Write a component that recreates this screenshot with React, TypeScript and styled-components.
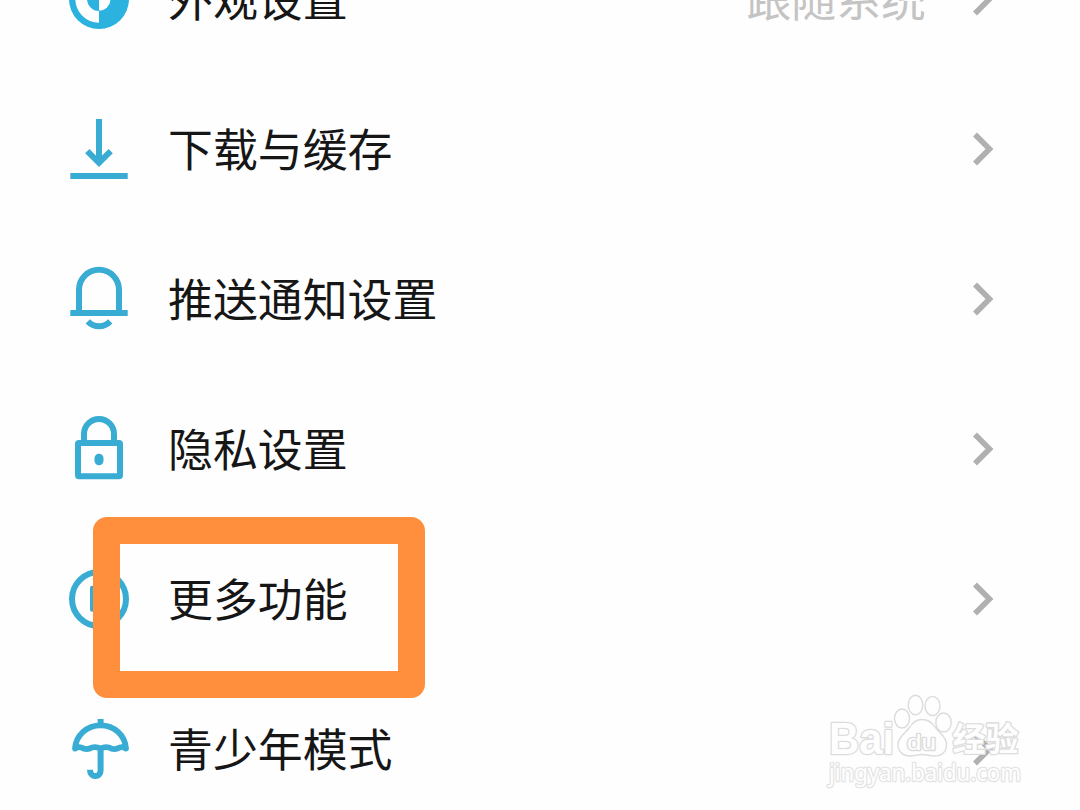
import React from 'react';
import styled, { createGlobalStyle } from 'styled-components';

const GlobalStyle = createGlobalStyle`
  * {
    box-sizing: border-box;
  }
  body {
    margin: 0;
    background-color: #fefefe;
    font-family: 'Liberation Sans', 'Noto Sans CJK SC', sans-serif;
  }
`;

const Screen = styled.main`
  position: relative;
  width: 1080px;
  height: 810px;
  overflow: hidden;
  background-color: #fefefe;
`;

/* the list is scrolled half way into its first row */
const SettingList = styled.ul`
  list-style: none;
  margin: -76px 0 0;
  padding: 0;
`;

const SettingRow = styled.li`
  display: flex;
  align-items: center;
  height: 150px;
  padding: 0 80px 0 60px;
`;

const RowIcon = styled.svg<{ $color?: string }>`
  flex: none;
  width: 80px;
  height: 80px;
  margin-right: 28px;
  color: ${({ $color }) => $color || '#38acd2'};
  fill: none;
  stroke: currentColor;
  stroke-width: 6;
`;

const Label = styled.span`
  flex: 1;
  padding-bottom: 3px;
  color: #161616;
  font-family: 'Noto Sans CJK SC', sans-serif;
  font-size: 44.9px;
  line-height: 64px;
  white-space: nowrap;
`;

const Value = styled(Label)`
  flex: none;
  margin-right: 41px;
  color: #c4c4c4;
`;

const Arrow = styled.svg`
  flex: none;
  width: 33px;
  height: 40px;
  fill: none;
  stroke: #b0b0b0;
  stroke-width: 5.6;
`;

const Highlight = styled.div`
  position: absolute;
  left: 93px;
  top: 517px;
  width: 332px;
  height: 181px;
  border: 27px solid #ff8f3c;
  border-radius: 14px;
`;

const Watermark = styled.svg`
  position: absolute;
  left: 820px;
  top: 685px;
  width: 210px;
  height: 110px;
  fill: #fefefe;
  stroke: #dcdcdc;
  stroke-width: 1.4;
  text {
    paint-order: stroke;
    stroke-width: 2.6;
    stroke-linejoin: round;
  }
`;

const ThemeIcon = () => (
  <RowIcon viewBox="0 0 80 80" $color="#2bb2de">
    <circle cx="39" cy="40" r="30" fill="currentColor" stroke="none" />
    <path d="M39 16.3a23.7 23.7 0 0 0 0 47.4V52a12 12 0 0 1 0-24z" fill="#fefefe" stroke="none" />
    <path d="M39 28.500a11.500 11.500 0 0 1 0 23z" fill="#fefefe" stroke="none" />
  </RowIcon>
);

const DownloadIcon = () => (
  <RowIcon viewBox="0 0 80 80">
    <path d="M39 10v44M27.300 42.100L39 53.800l11.700-11.700M10.300 67h57.400" />
  </RowIcon>
);

const BellIcon = () => (
  <RowIcon viewBox="0 0 80 80">
    <path d="M19 53V30.700a20 20 0 0 1 40 0V53M10.300 54h57.400M27.800 62.400a15.400 15.400 0 0 0 22.400 0" />
  </RowIcon>
);

const LockIcon = () => (
  <RowIcon viewBox="0 0 80 80">
    <rect x="18" y="34" width="42" height="33.300" rx="1" />
    <path d="M24 34v-9a15 15 0 0 1 30 0v9" />
    <rect x="34.500" y="44.700" width="9" height="11.600" rx="4.500" fill="currentColor" stroke="none" />
  </RowIcon>
);

const MoreIcon = () => (
  <RowIcon viewBox="0 0 80 80">
    <circle cx="39" cy="40" r="27" />
    <rect x="30" y="26.700" width="20" height="26" rx="2" fill="currentColor" stroke="none" />
  </RowIcon>
);

const UmbrellaIcon = () => (
  <RowIcon viewBox="0 0 80 80">
    <path d="M40.600 10v6" />
    <path
      d="M15 39.500C16 26 27 16.300 40.600 16.300S65 26 66 39.500q-4-2.800-8.500 0-4.200 1.600-8.500-1-4.200-1.200-8.500 1-4.200-2.200-8.500-1-4.200 2.600-8.500 1-4.500-2.800-8.500 0z"
      strokeWidth="5.800"
      strokeLinejoin="round"
    />
    <path d="M40.600 40v21.500c0 7.600-10.600 7.600-10.600-.8" />
  </RowIcon>
);

interface Setting {
  title: string;
  Icon: React.ComponentType;
  value?: string;
}

const settings: Setting[] = [
  { title: '外观设置', Icon: ThemeIcon, value: '跟随系统' },
  { title: '下载与缓存', Icon: DownloadIcon },
  { title: '推送通知设置', Icon: BellIcon },
  { title: '隐私设置', Icon: LockIcon },
  { title: '更多功能', Icon: MoreIcon },
  { title: '青少年模式', Icon: UmbrellaIcon },
];

const BaiduMark = () => (
  <Watermark viewBox="820 685 210 110">
    <text x="829" y="754" fontFamily="Liberation Sans" fontWeight="700" fontSize="44" textLength="65" lengthAdjust="spacingAndGlyphs">
      Bai
    </text>
    <ellipse cx="902" cy="718.500" rx="7.500" ry="9.500" />
    <ellipse cx="915.500" cy="705" rx="7.300" ry="9.800" />
    <ellipse cx="932.500" cy="706" rx="7.500" ry="9.600" />
    <ellipse cx="943.500" cy="722.500" rx="7.700" ry="9.500" />
    <path d="M922 719.500c-6 0-9.500 3-12.500 8-4 6-11.500 9-11.500 17 0 7 5 11.500 12 11.500 4 0 8-1.500 12-1.500s8 1.500 12 1.500c8 0 12.500-4.500 12.500-11.500 0-8-7-11-11-17s-7.500-8-13.500-8z" />
    <text x="907" y="750" fontFamily="Liberation Sans" fontSize="22" textLength="29" lengthAdjust="spacingAndGlyphs">
      du
    </text>
    <text x="952.500" y="751" fontFamily="Noto Sans CJK SC" fontWeight="700" fontSize="33">
      经验
    </text>
    <text x="829" y="781" fontFamily="Noto Sans" fontSize="23" stroke="#e4e4e4" textLength="192" lengthAdjust="spacingAndGlyphs">
      jingyan.baidu.com
    </text>
  </Watermark>
);

const App = () => (
  <>
    <GlobalStyle />
    <Screen>
      <SettingList>
        {settings.map(({ title, Icon, value }) => (
          <SettingRow key={title}>
            <Icon />
            <Label>{title}</Label>
            {value && <Value>{value}</Value>}
            <Arrow viewBox="0 0 33 40">
              <path d="M8 5.500L22.500 20 8 34.500" />
            </Arrow>
          </SettingRow>
        ))}
      </SettingList>
      <Highlight />
      <BaiduMark />
    </Screen>
  </>
);

export default App;
